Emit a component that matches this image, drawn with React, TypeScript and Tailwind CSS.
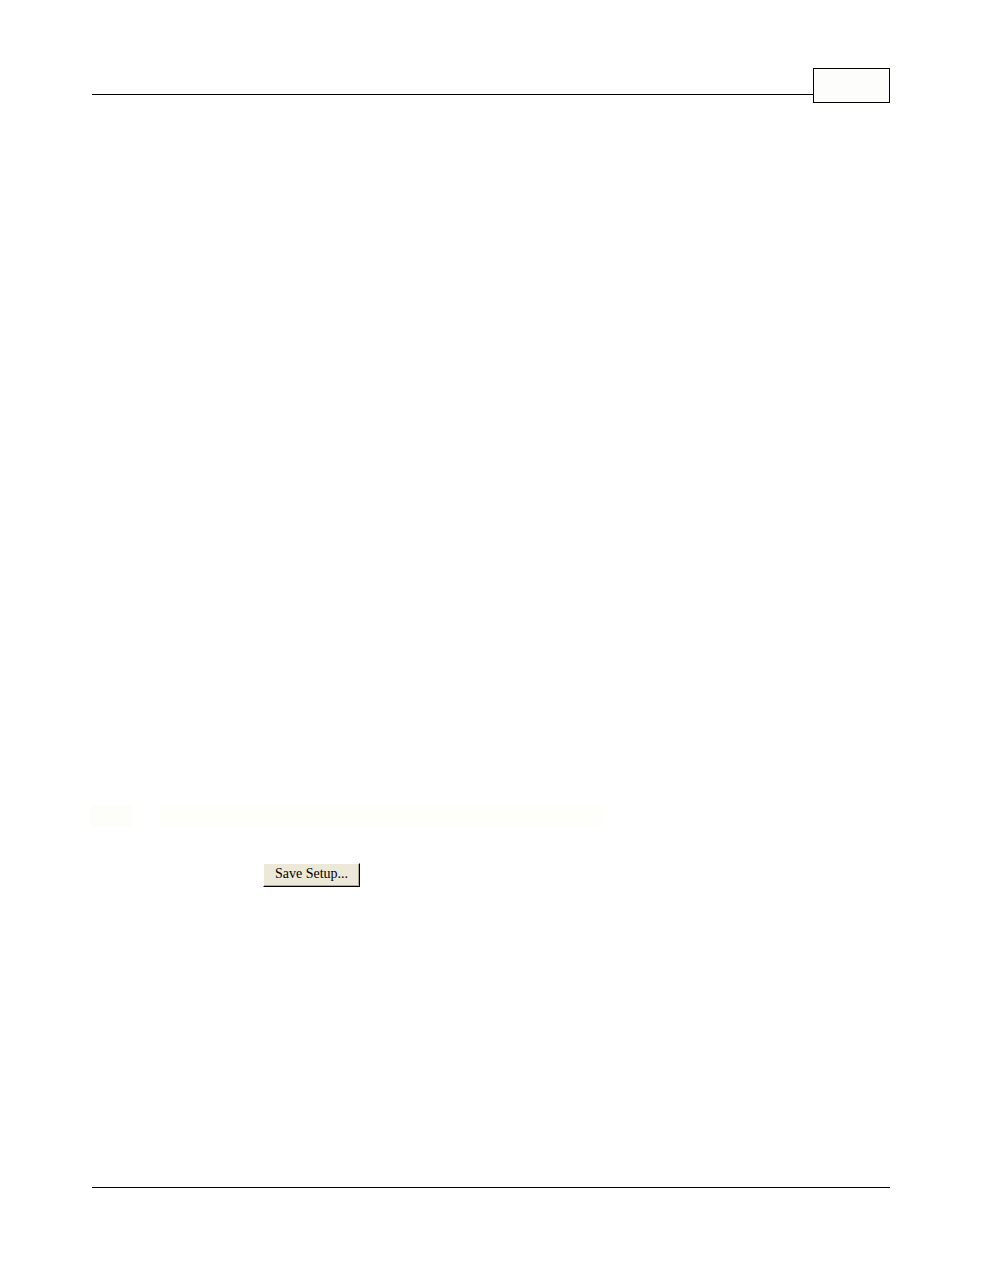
export default function App() {
  return (
    <div className="w-[981px] h-[1270px] bg-white pt-[68px] font-['Liberation_Serif',serif]">
      {/* running header: rule with page number box */}
      <div className="ml-[92px] w-[798px] flex items-start">
        <div className="flex-1 mt-[26px] h-px bg-black" />
        <div className="w-[77px] h-[35px] border border-black bg-[#fdfdfb]" />
      </div>

      {/* faint table row */}
      <div className="mt-[702px] h-[22px] flex">
        <div className="ml-[90px] w-[43px] bg-[#fdfdfa]" />
        <div className="ml-[27px] w-[444px] bg-[#fefefb]" />
      </div>

      <div className="mt-[36px] ml-[263px] flex">
        <button className="w-[97px] h-[24px] pb-[3px] bg-[#ece9d8] border border-t-white border-l-white border-r-black border-b-black shadow-[inset_-1px_-1px_0_#aca899] text-black text-[14px] leading-none">
          Save Setup...
        </button>
      </div>

      {/* footer rule */}
      <div className="mt-[300px] ml-[92px] w-[798px] h-px bg-black" />
    </div>
  );
}
